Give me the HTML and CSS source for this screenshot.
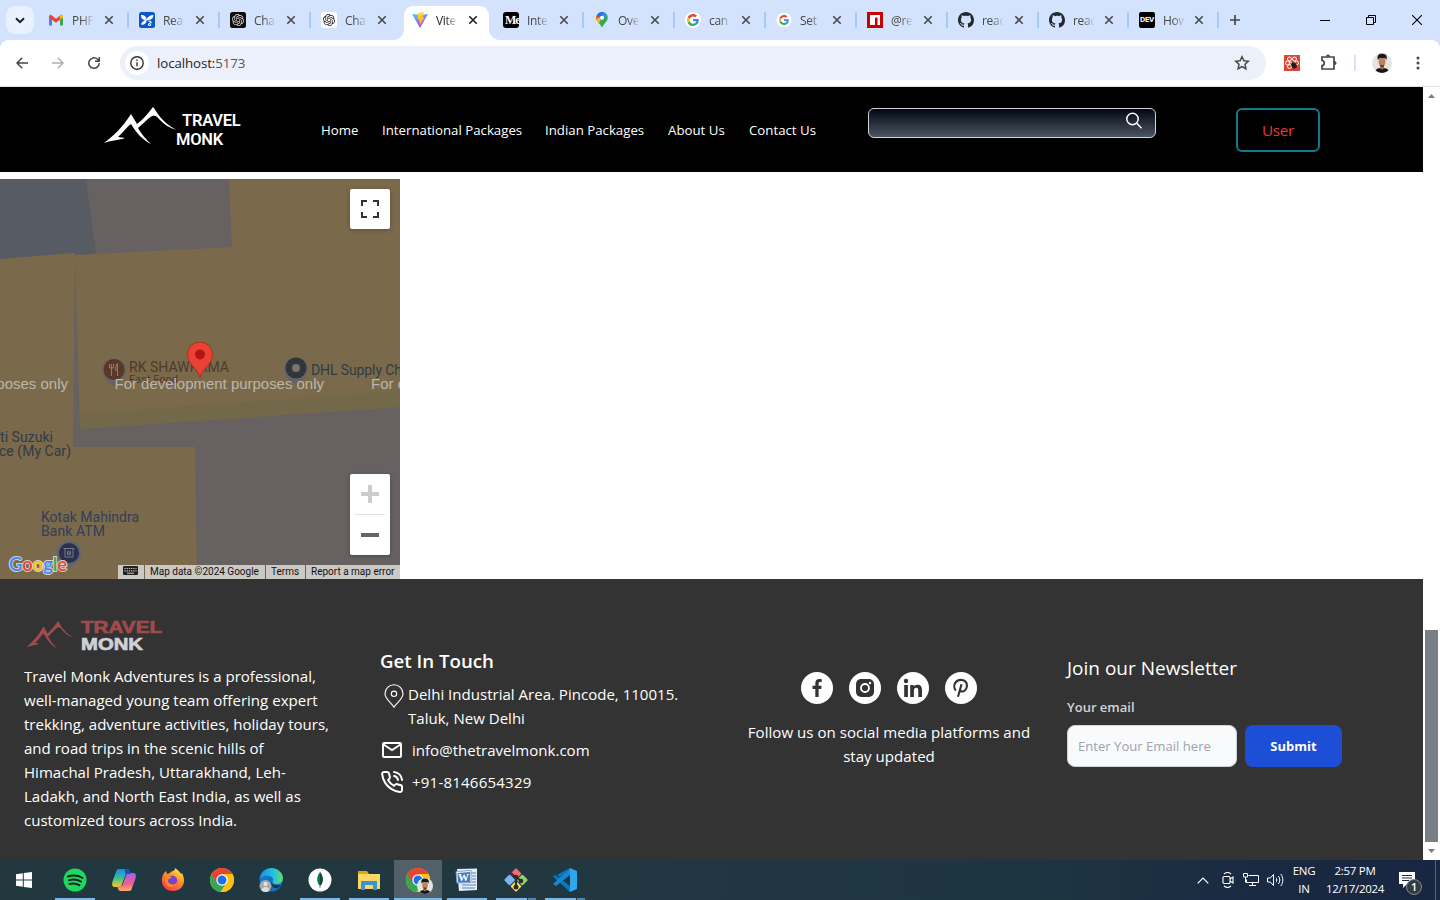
FILE: index.html
```html
<!DOCTYPE html>
<html lang="en">
<head>
<meta charset="utf-8">
<title>Vite + React</title>
<link rel="stylesheet" href="styles.css">
</head>
<body>
<svg class="defs" width="0" height="0">
  <defs>
    <symbol id="x" viewBox="0 0 10 10"><path d="M1.3 1.3l7.4 7.4M8.7 1.3L1.3 8.7" stroke="currentColor" stroke-width="1.6" fill="none"/></symbol>
    <symbol id="google" viewBox="0 0 48 48"><path fill="#ea4335" d="M24 9.5c3.5 0 6.700 1.200 9.200 3.600l6.900-6.900C35.900 2.400 30.500 0 24 0 14.600 0 6.500 5.400 2.600 13.200l8 6.200C12.400 13.700 17.700 9.500 24 9.500z"/><path fill="#4285f4" d="M47 24.600c0-1.600-.2-3.100-.4-4.600H24v9h12.900c-.6 3-2.200 5.500-4.800 7.200l7.700 6C44.400 38 47 31.800 47 24.600z"/><path fill="#fbbc05" d="M10.500 28.600A14.500 14.500 0 0 1 10.500 19.400l-8-6.200a24 24 0 0 0 0 21.600z"/><path fill="#34a853" d="M24 48c6.500 0 11.900-2.100 15.900-5.800l-7.700-6c-2.200 1.500-4.900 2.300-8.200 2.300-6.300 0-11.600-4.200-13.500-9.900l-8 6.200C6.500 42.600 14.600 48 24 48z"/></symbol>
    <symbol id="openai" viewBox="0 0 24 24"><path fill="currentColor" d="M22.282 9.821a5.985 5.985 0 0 0-.516-4.910 6.046 6.046 0 0 0-6.510-2.900A6.065 6.065 0 0 0 4.981 4.180a5.985 5.985 0 0 0-3.998 2.900 6.046 6.046 0 0 0 .743 7.097 5.980 5.980 0 0 0 .510 4.911 6.051 6.051 0 0 0 6.515 2.900A5.985 5.985 0 0 0 13.260 24a6.056 6.056 0 0 0 5.772-4.206 5.990 5.990 0 0 0 3.998-2.900 6.056 6.056 0 0 0-.748-7.073zM13.260 22.430a4.476 4.476 0 0 1-2.876-1.040l.141-.081 4.779-2.758a.795.795 0 0 0 .393-.681v-6.737l2.020 1.169a.071.071 0 0 1 .038.052v5.583a4.504 4.504 0 0 1-4.495 4.493zM3.600 18.304a4.470 4.470 0 0 1-.535-3.014l.142.085 4.783 2.759a.771.771 0 0 0 .780 0l5.843-3.369v2.332a.080.080 0 0 1-.033.062L9.740 19.950a4.500 4.500 0 0 1-6.140-1.646zM2.340 7.896a4.485 4.485 0 0 1 2.366-1.973V11.600a.766.766 0 0 0 .388.677l5.815 3.354-2.020 1.169a.076.076 0 0 1-.071 0l-4.830-2.786A4.504 4.504 0 0 1 2.340 7.872zm16.597 3.855l-5.833-3.387L15.119 7.200a.076.076 0 0 1 .071 0l4.830 2.791a4.494 4.494 0 0 1-.676 8.105v-5.678a.790.790 0 0 0-.407-.667zm2.010-3.023l-.141-.085-4.774-2.782a.776.776 0 0 0-.785 0L9.409 9.230V6.897a.066.066 0 0 1 .028-.061l4.830-2.787a4.500 4.500 0 0 1 6.680 4.660zM8.307 12.863l-2.020-1.164a.080.080 0 0 1-.038-.057V6.075a4.500 4.500 0 0 1 7.375-3.453l-.142.080L8.704 5.460a.795.795 0 0 0-.393.681zm1.098-2.366l2.602-1.500 2.606 1.500v3l-2.597 1.500-2.607-1.500z"/></symbol>
    <symbol id="github" viewBox="0 0 16 16"><path fill="#24292f" d="M8 0C3.580 0 0 3.580 0 8c0 3.540 2.290 6.530 5.470 7.590.4.070.55-.17.55-.38 0-.19-.01-.82-.01-1.490-2.010.37-2.530-.49-2.690-.94-.09-.23-.48-.94-.82-1.130-.28-.15-.68-.52-.01-.53.63-.01 1.080.58 1.230.82.72 1.210 1.870.87 2.330.66.07-.52.28-.87.51-1.070-1.780-.2-3.640-.89-3.640-3.950 0-.87.31-1.590.82-2.150-.08-.2-.36-1.020.08-2.120 0 0 .67-.21 2.200.82.64-.18 1.320-.27 2-.27s1.360.09 2 .27c1.530-1.040 2.200-.82 2.200-.82.44 1.100.16 1.920.08 2.120.51.56.82 1.270.82 2.150 0 3.070-1.870 3.750-3.650 3.950.29.25.54.73.54 1.480 0 1.070-.01 1.930-.01 2.200 0 .21.15.46.55.38A8.010 8.010 0 0 0 16 8c0-4.420-3.580-8-8-8z"/></symbol>
    <symbol id="peaks" viewBox="0 0 72 38" preserveAspectRatio="none"><path fill="currentColor" d="M0 36C9 29 18 21 27 7L33 17C38 13 44 7 49 0C52 3 55 10 60 14C64 18 68 20 72 23C66 21 61 18 56 13C53 9 51 8 48 9C43 12 39 17 34 21C38 28 42 32 47 37C39 33 33 27 27 17C24 19 21 23 17 27L14 30L21 31C16 33 8 33 0 36Z"/></symbol>
    <symbol id="chrome" viewBox="0 0 24 24"><circle cx="12" cy="12" r="12" fill="#fbc116"/><path d="M12 12L1.600 6A12 12 0 0 0 10.500 23.900L16.700 15z" fill="#34a853"/><path d="M1.600 6A12 12 0 0 1 22.400 6H12L6.800 15z" fill="#ea4335"/><path d="M22.400 6A12 12 0 0 1 10.500 23.900L16.800 14.600 12 6z" fill="#fbc116"/><circle cx="12" cy="12" r="5.700" fill="#fff"/><circle cx="12" cy="12" r="4.500" fill="#1a73e8"/></symbol>
    <symbol id="face" viewBox="0 0 20 20"><circle cx="10" cy="10" r="10" fill="#e5e4e2"/><path d="M3.500 17.500C5 15 8 15 10 15s5 0 6.500 2.500A10 10 0 0 1 3.500 17.500z" fill="#171717"/><path d="M8 12h4v3.500l-2 1-2-1z" fill="#9c6c4d"/><ellipse cx="10" cy="8.800" rx="3.500" ry="5" fill="#b98461"/><path d="M5.800 7C4.500 1 8 .2 11 .8c3 .2 4.500 2 3.400 6.200L13 5H7.500z" fill="#17191d"/><path d="M8 11.500c1 .7 3 .7 4 0L11.500 14h-3z" fill="#5a3e30"/></symbol>
  </defs>
</svg>

<header class="tabstrip">
  <button class="tab-search"><svg width="10" height="7" viewBox="0 0 10 7"><path d="M1 1.200l4 4 4-4" fill="none" stroke="#1f1f1f" stroke-width="2"/></svg></button>
  <div class="tab"><svg class="fav" viewBox="0 0 16 16"><path fill="#4285f4" d="M1 4v9.500h3V7z"/><path fill="#34a853" d="M12 7v6.500h3V4z"/><path fill="#ea4335" d="M1 4l1.500-1.500L8 6.700l5.500-4.200L15 4v1.500L8 10.700 1 5.500z"/><path fill="#fbbc04" d="M12 4v3.600l3-2.200V4l-1.500-1.500z"/></svg><span>PHP</span><svg class="close"><use href="#x"/></svg></div>
  <div class="tab"><svg class="fav" viewBox="0 0 16 16"><rect width="16" height="16" rx="2.500" fill="#0b57d0"/><g fill="#fff"><path d="M8 7.500C7 4.500 5 2.500 2 3c0 3 1 4.700 3.800 5z"/><path d="M7.500 7.500C9 4.500 11 3 14.500 3c-.5 3.500-2 5-6.500 5.200z"/><path d="M7.500 8C5 8 3 9.500 2 12.500c3 .8 5-.8 6-4.500z"/><circle cx="10.500" cy="12.500" r="1.600"/><path d="M8.500 8.500l3.500.5 1 2.500-2-1z"/></g><circle cx="10.500" cy="12.500" r=".6" fill="#0b57d0"/></svg><span>Rea</span><svg class="close"><use href="#x"/></svg></div>
  <div class="tab"><svg class="fav dark" viewBox="0 0 16 16"><rect width="16" height="16" rx="2.500" fill="#0d0d0d"/><use href="#openai" x="2" y="2" width="12" height="12"/></svg><span>Cha</span><svg class="close"><use href="#x"/></svg></div>
  <div class="tab no-line"><svg class="fav" viewBox="0 0 16 16"><rect width="16" height="16" rx="3" fill="#fff"/><use href="#openai" x="2" y="2" width="12" height="12"/></svg><span>Cha</span><svg class="close"><use href="#x"/></svg></div>
  <div class="tab active"><svg class="fav" viewBox="0 0 16 16"><defs><linearGradient id="v" x2=".6" y2="1"><stop stop-color="#41d1ff"/><stop offset="1" stop-color="#bd34fe"/></linearGradient><linearGradient id="bolt" x2="0" y2="1"><stop stop-color="#ffdd35"/><stop offset="1" stop-color="#ffa800"/></linearGradient></defs><path fill="url(#v)" d="M0 2l8 14 8-14-7 1z"/><path fill="url(#bolt)" d="M12 0L6 1.200 5.500 7.500l1.800-.4-.6 3 1.500-.5L7.500 14 12.500 5.200l-2 .4L12 0z"/></svg><span>Vite</span><svg class="close"><use href="#x"/></svg></div>
  <div class="tab"><span class="fav medium">Me</span><span>Inte</span><svg class="close"><use href="#x"/></svg></div>
  <div class="tab"><svg class="fav" viewBox="0 0 16 16"><defs><clipPath id="pinclip"><path d="M8 0a5.700 5.700 0 0 0-5.700 5.700C2.300 10 6.500 11 8 16c1.500-5 5.700-6 5.700-10.300A5.700 5.700 0 0 0 8 0z"/></clipPath></defs><g clip-path="url(#pinclip)"><path fill="#34a853" d="M0 0h16v16H0z"/><path fill="#fbbc04" d="M0 12V5l4-1 5 2-6 7z"/><path fill="#ea4335" d="M0 0h4l3 3-5 5z"/><path fill="#1a73e8" d="M3 2V0h8L6 6z"/><path fill="#4285f4" d="M10 0h6v5l-4-1-5 6-1-4z"/></g><circle cx="8" cy="5.700" r="2" fill="#fff"/></svg><span>Ove</span><svg class="close"><use href="#x"/></svg></div>
  <div class="tab"><svg class="fav" viewBox="0 0 16 16"><circle cx="8" cy="8" r="8" fill="#fff"/><use href="#google" x="2" y="2" width="12" height="12"/></svg><span>can</span><svg class="close"><use href="#x"/></svg></div>
  <div class="tab"><svg class="fav" viewBox="0 0 16 16"><circle cx="8" cy="8" r="7.500" fill="#fff"/><use href="#google" x="3" y="3" width="10" height="10"/></svg><span>Set</span><svg class="close"><use href="#x"/></svg></div>
  <div class="tab"><svg class="fav" viewBox="0 0 16 16"><path fill="#cb0000" d="M0 0h16v16H0z"/><path fill="#fff" d="M3 3h10v10h-2.500V5.500H8V13H3z"/></svg><span>@rea</span><svg class="close"><use href="#x"/></svg></div>
  <div class="tab"><svg class="fav"><use href="#github"/></svg><span>reac</span><svg class="close"><use href="#x"/></svg></div>
  <div class="tab short"><svg class="fav"><use href="#github"/></svg><span>reac</span><svg class="close"><use href="#x"/></svg></div>
  <div class="tab short"><span class="fav dev">DEV</span><span>How</span><svg class="close"><use href="#x"/></svg></div>
  <svg class="new-tab" width="10" height="10"><path d="M5 0v10M0 5h10" stroke="#474747" stroke-width="1.700"/></svg>
  <div class="window-buttons">
    <svg width="10" height="10"><path d="M0 5.500h10" stroke="#000"/></svg>
    <svg width="10" height="10" fill="none" stroke="#000"><path d="M.5 2.500h7v7h-7zM2.500 2.500v-2h7v7h-2"/></svg>
    <svg width="10" height="10"><path d="M0 0l10 10M10 0L0 10" stroke="#000" stroke-width="1.100"/></svg>
  </div>
</header>

<div class="toolbar">
  <div class="nav-buttons">
    <svg width="12" height="12" fill="none" stroke="#474747" stroke-width="1.500"><path d="M12 6H1.200M6.200.8L1 6l5.200 5.200"/></svg>
    <svg width="12" height="12" fill="none" stroke="#b0b0b0" stroke-width="1.500"><path d="M0 6h10.800M5.800.8L11 6l-5.200 5.200"/></svg>
    <svg width="12" height="12" fill="none" stroke="#474747" stroke-width="1.500"><path d="M11.200 6A5.200 5.200 0 1 1 9.600 2.300L11.200 4M11.300 0v4.300H7"/></svg>
  </div>
  <div class="omnibox">
    <span class="site-info"><svg width="14" height="14" fill="none" stroke="#333" stroke-width="1.400"><circle cx="7" cy="7" r="6.200"/><path d="M7 6.200v4M7 3.500v1.500"/></svg></span>
    <span class="url">localhost:<i>5173</i></span>
    <svg class="star" width="16" height="16" fill="none" stroke="#474747" stroke-width="1.500"><path d="M8 1.800l1.900 4 4.400.5-3.300 3 .9 4.400L8 11.500l-3.900 2.200.9-4.400-3.300-3 4.400-.5z"/></svg>
  </div>
  <svg class="ext" width="16" height="16"><path fill="#e04434" d="M0 0h16v16H0z"/><g fill="none" stroke="#fff" stroke-width="1"><circle cx="5.500" cy="4" r="2"/><circle cx="10.500" cy="4" r="2"/><circle cx="3.500" cy="8" r="2"/><circle cx="12.500" cy="8" r="2"/><circle cx="5.500" cy="11.500" r="2"/><path d="M5 6l5 4"/></g><ellipse cx="10" cy="10.500" rx="2.500" ry="3.300" fill="#211b1b" transform="rotate(-30 10 10.500)"/></svg>
  <svg class="puzzle" width="18" height="18" fill="none" stroke="#474747" stroke-width="1.700"><path d="M2 3h12v12H2v-3.500c3 0 3-5 0-5z"/><path d="M6.500 2.200a1.500 1.200 0 0 1 3 0zM14.800 7.500a1.200 1.500 0 0 1 0 3z" fill="#474747" stroke-width="1"/></svg>
  <i class="sep"></i>
  <svg class="avatar" width="20" height="20"><use href="#face"/></svg>
  <svg class="dots" width="4" height="14" fill="#474747"><circle cx="2" cy="2" r="1.500"/><circle cx="2" cy="7" r="1.500"/><circle cx="2" cy="12" r="1.500"/></svg>
</div>

<div class="viewport">
<div class="page">
  <nav class="navbar">
    <div class="logo">
      <svg class="peaks" width="72" height="38"><use href="#peaks"/></svg>
      <div class="logo-text"><b>TRAVEL</b><b>MONK</b></div>
    </div>
    <ul class="links"><li class="l1">Home</li><li class="l2">International Packages</li><li class="l3">Indian Packages</li><li class="l4">About Us</li><li>Contact Us</li></ul>
    <div class="search"><svg width="18" height="18" fill="none" stroke="#fff" stroke-width="1.500"><circle cx="7.500" cy="7" r="5.700"/><path d="M11.800 11.300l4.700 5"/></svg></div>
    <button class="user">User</button>
  </nav>

  <section class="map">
    <svg width="400" height="400" viewBox="0 0 400 400">
      <path fill="#676162" d="M0 0h400v400H0z"/>
      <path fill="#575b64" d="M0 0h86l10 76-96 6z"/>
      <path fill="#5b5b5e" d="M88 20l8 56h-5z"/>
      <path fill="#7a6a4b" d="M0 80l75-6-2 194h122l2 132H0z"/>
      <path fill="#7a6a4b" d="M75 76l157-8-3-68h171v228L80 250z"/>
      <path fill="#73684a" d="M80 235l320-23v16L80 250z"/>
      <g class="poi">
        <path d="M114 208c-4-4-12-9-12-17a12 12 0 0 1 24 0c0 8-8 13-12 17z" fill="#666463"/><circle cx="114" cy="190.500" r="10.500" fill="#5a3828"/>
        <path d="M109.500 185v4M111.500 185v4M113.500 185v4M109.500 189h4M111.500 189v8M117.500 197v-12c-2 1-2 4-2 6h2" stroke="#8d786c" fill="none" stroke-width="1.100"/>
        <text x="129" y="193" textLength="100" fill="#50382e">RK SHAWRAMA</text>
        <text x="129" y="204" font-size="11" textLength="49" fill="#50382e">Fast Food</text>
        <path d="M296 207c-4-4-12-8-12-17a12 12 0 0 1 24 0c0 9-8 13-12 17z" fill="#666463"/><circle cx="296" cy="189" r="10.500" fill="#30363c"/><circle cx="296" cy="189" r="4" fill="#77726c"/>
        <g fill="#2f3b45"><text x="311" y="196" textLength="91">DHL Supply Ch</text><text x="0" y="263" textLength="53">ti Suzuki</text><text x="-1" y="277" textLength="72">ce (My Car)</text></g>
        <g fill="#333d5b"><text x="41" y="343" textLength="98">Kotak Mahindra</text><text x="41" y="357" textLength="64">Bank ATM</text></g>
        <path d="M69 390c-4-4-12-8-12-16a12 12 0 0 1 24 0c0 8-8 12-12 16z" fill="#606472"/><circle cx="69" cy="374" r="10" fill="#2b304e"/><path d="M63.500 369.500h11M65 370v8h8v-8M67.500 372v4M69 371.500v5M70.500 372v4" stroke="#777b86" fill="none"/>
      </g>
      <g class="watermark"><text x="-142" y="209.500" textLength="210">For development purposes only</text><text x="114.500" y="209.500" textLength="209.500">For development purposes only</text><text x="371" y="209.500" textLength="210">For development purposes only</text></g>
      <path d="M200 199c-1-9-12.500-13-12.500-23.500a12.500 12.500 0 0 1 25 0C212.500 186 201 190 200 199z" fill="#ea4335" stroke="#b82920"/><circle cx="200" cy="175.500" r="5" fill="#b31412"/>
      <text class="google-mark" x="9" y="392" textLength="58" lengthAdjust="spacingAndGlyphs"><tspan fill="#4285f4">G</tspan><tspan fill="#ea4335">o</tspan><tspan fill="#fbbc05">o</tspan><tspan fill="#4285f4">g</tspan><tspan fill="#34a853">l</tspan><tspan fill="#ea4335">e</tspan></text>
    </svg>
    <button class="fullscreen"><svg width="18" height="18" fill="none" stroke="#333" stroke-width="2"><path d="M1 6V1h5M12 1h5v5M17 12v5h-5M6 17H1v-5"/></svg></button>
    <div class="zoom-control"><svg width="18" height="18"><path d="M9 0v18M0 9h18" stroke="#ccc" stroke-width="4"/></svg><i></i><svg width="18" height="18"><path d="M0 9h18" stroke="#666" stroke-width="4"/></svg></div>
    <div class="attribution">
      <span class="keys"><svg width="15" height="9"><path fill="#222" d="M1 0h13a1 1 0 0 1 1 1v7a1 1 0 0 1-1 1H1a1 1 0 0 1-1-1V1a1 1 0 0 1 1-1z"/><path stroke="#ccc" stroke-width="1.200" stroke-dasharray="1.200 1" d="M1.500 2.500h12M1.500 4.800h12"/><path stroke="#ccc" d="M4 7.200h7"/></svg></span><span class="data">Map data ©2024 Google</span><span class="terms">Terms</span><span class="report">Report a map error</span>
    </div>
  </section>

  <footer class="footer">
    <div class="about">
      <div class="footer-logo"><svg width="47" height="28"><use href="#peaks"/></svg><svg class="wordmark" width="84" height="36"><text class="red" x="0" y="14" textLength="81" lengthAdjust="spacingAndGlyphs">TRAVEL</text><text x="0" y="31" textLength="62" lengthAdjust="spacingAndGlyphs">MONK</text></svg></div>
      <p>Travel Monk Adventures is a professional,<br>well-managed young team offering expert<br>trekking, adventure activities, holiday tours,<br>and road trips in the scenic hills of<br>Himachal Pradesh, Uttarakhand, Leh-<br>Ladakh, and North East India, as well as<br>customized tours across India.</p>
    </div>
    <div class="contact">
      <h3>Get In Touch</h3>
      <div class="row address"><svg width="20" height="24" fill="none" stroke="#fff" stroke-width="1.100"><path d="M10 23.300C7.500 19 1 15 1 9.800a9 9 0 0 1 18 0C19 15 12.500 19 10 23.300z"/><circle cx="10" cy="9.800" r="2.700"/></svg><p>Delhi Industrial Area. Pincode, 110015.<br>Taluk, New Delhi</p></div>
      <div class="row mail"><svg width="20" height="16" fill="none" stroke="#fff" stroke-width="1.900"><rect x="1" y="1" width="18" height="14" rx="1"/><path d="M1.500 2.500L10 8l8.500-5.500"/></svg><p>info@thetravelmonk.com</p></div>
      <div class="row phone"><svg width="24" height="24" viewBox="0 0 24 24" fill="none" stroke="#fff" stroke-width="2" stroke-linecap="round" stroke-linejoin="round"><path d="M22 16.920v3a2 2 0 0 1-2.180 2 19.790 19.790 0 0 1-8.630-3.070 19.500 19.500 0 0 1-6-6A19.790 19.790 0 0 1 2.120 4.180 2 2 0 0 1 4.110 2h3a2 2 0 0 1 2 1.720c.127.960.361 1.903.7 2.810a2 2 0 0 1-.45 2.110L8.090 9.910a16 16 0 0 0 6 6l1.270-1.270a2 2 0 0 1 2.110-.45c.907.339 1.850.573 2.810.7A2 2 0 0 1 22 16.920z"/><path d="M14.050 2a9 9 0 0 1 8 7.940M14.050 6A5 5 0 0 1 18 10"/></svg><p>+91-8146654329</p></div>
    </div>
    <div class="social">
      <div class="circles">
        <span><svg width="32" height="32"><path fill="#333" d="M14.300 25v-8h-2.800v-3.200h2.800v-2.400c0-3 1.500-4.400 4-4.400 1 0 1.900.1 2.400.2v2.900h-1.500c-1.300 0-1.600.6-1.600 1.700v2h3l-.4 3.200h-2.600v8z"/></svg></span>
        <span><svg width="32" height="32"><rect x="7" y="7" width="18" height="18" rx="5" fill="#333"/><circle cx="16" cy="16" r="4" fill="none" stroke="#fff" stroke-width="1.800"/><circle cx="21" cy="11" r="1.200" fill="#fff"/></svg></span>
        <span><svg width="32" height="32" fill="#333"><circle cx="9" cy="9" r="2.200"/><path d="M7.200 13h3.700v12H7.200zM13.200 13h3.500v1.600c.7-1.200 2-1.900 3.600-1.900 3.500 0 4.700 2 4.700 5.700V25h-3.700v-6c0-2-.4-3.200-1.900-3.200-1.800 0-2.500 1.200-2.500 3.200v6h-3.700z"/></svg></span>
        <span><svg width="32" height="32" fill="none" stroke="#333" stroke-width="2.100"><path d="M10.800 18.500C8.700 16 9 12.500 10.500 10.500c3-4 9.500-3 11 .5 1.500 3.700-1 8.500-4 8.500-1.500 0-2.500-.7-2.700-1.700M16.500 12.200L13 24.800"/></svg></span>
      </div>
      <p>Follow us on social media platforms and<br>stay updated</p>
    </div>
    <form class="newsletter">
      <h3>Join our Newsletter</h3>
      <label>Your email</label>
      <div class="fields"><span class="input">Enter Your Email here</span><button type="button">Submit</button></div>
    </form>
  </footer>
</div>
<aside class="scrollbar"><svg width="7" height="4"><path fill="#767c82" d="M0 4L3.500 0 7 4z"/></svg><i></i><svg width="7" height="4"><path fill="#767c82" d="M0 0l3.500 4L7 0z"/></svg></aside>
</div>

<div class="taskbar">
  <div class="app start"><svg width="16" height="16" fill="#fff"><path d="M0 2.200l6.800-1v6.300H0zM7.800 1L16 0v7.500H7.800zM0 8.500h6.800v6.300L0 13.800zM7.800 8.500H16V16l-8.200-1.100z"/></svg></div>
  <div class="app open"><svg viewBox="0 0 24 24"><circle cx="12" cy="12" r="11.500" fill="#1ed760"/><path d="M5 8.500c5-1.500 10-1 14.500 1.300M6 12.300c4-1.200 8.500-.8 12 1.200M6.500 16c3.500-1 7-.5 10 1.100" fill="none" stroke="#14231d" stroke-width="2" stroke-linecap="round"/></svg></div>
  <div class="app"><svg viewBox="0 0 24 24"><defs><linearGradient id="ca" x2="0" y2="1"><stop stop-color="#168bf0"/><stop offset=".5" stop-color="#3dbb91"/><stop offset="1" stop-color="#f5d21c"/></linearGradient><linearGradient id="cb" x2="0" y2="1"><stop stop-color="#a264ed"/><stop offset=".6" stop-color="#ef5e93"/><stop offset="1" stop-color="#ffb05b"/></linearGradient></defs><path d="M7 1h8c3 0 3 3 4 5h-5l-4 10c-1 3-2 3-4 3H3c-4 0-3-4-2-7L4 4c.5-2 1-3 3-3z" fill="url(#ca)"/><path d="M17 23H9c-3 0-3-3-4-5h5l4-10c1-3 2-3 4-3h3c4 0 3 4 2 7l-3 8c-.5 2-1 3-3 3z" fill="url(#cb)"/><path d="M12.500 1H15c3 0 3 3 4 5h-5.500z" fill="#1650b5"/></svg></div>
  <div class="app"><svg viewBox="0 0 24 24"><defs><linearGradient id="ff" x1=".8" x2=".2" y2="1"><stop stop-color="#fff044"/><stop offset=".45" stop-color="#ff8a22"/><stop offset="1" stop-color="#ff2c5c"/></linearGradient></defs><path d="M3 5l2-2 1 3 3-1c2-3 5-1 5-5 3 2 5 4 6 6l1-1c5 10 0 18-9 18C2 23-2 13 3 5z" fill="url(#ff)"/><circle cx="11.500" cy="12.500" r="4.700" fill="#7642cf"/><path d="M4 8c4-1 4 1 7 1-1 2-4 1-4 4 0 4 7 5 9 1-1 7-11 6-12 0z" fill="#ff8b19"/></svg></div>
  <div class="app"><svg viewBox="0 0 24 24"><use href="#chrome"/></svg></div>
  <div class="app"><svg viewBox="0 0 24 24"><defs><linearGradient id="ed"><stop stop-color="#1b8ee3"/><stop offset=".6" stop-color="#28c1dc"/><stop offset="1" stop-color="#68db68"/></linearGradient></defs><circle cx="12" cy="12" r="11.500" fill="#1478c8"/><path d="M1 11C1 4 7 0 12 0c7 0 12 5 12 10 0 4-3 6-7 6-3 0-4-1-3-3 2-4-7-9-13-2z" fill="url(#ed)"/><path d="M13 10c-3 3-1 8 9 7-3 4-9 7-13 3-3-3-1-8 4-10z" fill="#213840"/><path d="M13 10c-4 0-7 5-4 9 2 3 7 5 10 1-6 1-9-4-6-10z" fill="#176ac1"/><circle cx="6.500" cy="18" r="6" fill="#aaa"/><circle cx="6.500" cy="16" r="2" fill="#e5e5e5"/><path d="M2.500 22c1-4 7-4 8 0-2 3-6 3-8 0z" fill="#ddd"/></svg></div>
  <div class="app open"><svg viewBox="0 0 24 24"><circle cx="12" cy="12" r="11.500" fill="#fff"/><path d="M12 4c4 5 3.500 11 0 14-3.500-3-4-9 0-14z" fill="#04785a"/><path d="M12 4c4 5 3.500 11 0 14z" fill="#164b3b"/><path d="M12 17v3" stroke="#888"/></svg></div>
  <div class="app open"><svg viewBox="0 0 24 24"><path fill="#e5a50a" d="M1 3h9l2 3v3H1z"/><path fill="#fbd765" d="M1 6h22v15H1z"/><path fill="#3a93d5" d="M4 13h16v9h-4v-5H8v5H4z"/></svg></div>
  <div class="app open current"><svg viewBox="0 0 24 24"><use href="#chrome"/></svg><svg class="badge" viewBox="0 0 20 20"><use href="#face"/></svg></div>
  <div class="app open word"><svg viewBox="0 0 24 24"><path fill="#e4edf7" d="M2 1l20-.5V22l-18 1z"/><path stroke="#5684bd" stroke-width="1.200" d="M16 5h5M17 8h4M17 11h4M17 14h4M7 17h14M7 20h13"/><path fill="#fff" stroke="#7d9fc9" d="M1 3.500l15-1v12L2 15z"/><path fill="#4a78b8" d="M2.500 5L15 4v10l-12 .5z"/><text x="3" y="13" class="w">W</text></svg></div>
  <div class="app open multi"><svg viewBox="0 0 24 24"><g transform="rotate(45 12 12)"><rect x="3.500" y="3.500" width="8" height="8" rx="1" fill="#f36d6d"/><rect x="12.500" y="3.500" width="8" height="8" rx="1" fill="#94d269"/><rect x="3.500" y="12.500" width="8" height="8" rx="1" fill="#7fb3f7"/><rect x="12.500" y="12.500" width="8" height="8" rx="1" fill="#ffe050"/></g><path d="M7 5l5 5v9M12 9l5 4" fill="none" stroke="#292e31" stroke-width="2"/><circle cx="12" cy="9" r="2.300" fill="#292e31"/><circle cx="12" cy="19" r="2.500" fill="#292e31"/><circle cx="17" cy="13" r="2.300" fill="#292e31"/></svg></div>
  <div class="app open multi"><svg viewBox="0 0 24 24"><path d="M17 0l7 3v18l-7 3-.5-1V1z" fill="#2fa7ef"/><path d="M17 0L6 10 2 7 0 8.500 17 24V17L4 7" fill="#0a78c8"/><path d="M17 6v12l-8-6z" fill="#213840"/><path d="M17 0v7L3 18l-3-2L16 1z" fill="#1688d8"/></svg></div>
  <div class="tray">
    <svg class="chevron" width="12" height="7"><path d="M.7 6.300L6 1l5.300 5.300" fill="none" stroke="#fff" stroke-width="1.200"/></svg>
    <svg class="meet" width="12" height="16" fill="none" stroke="#fff" stroke-width="1.100"><rect x="1" y="4.500" width="7" height="7" rx="1"/><path d="M8 7l3-2v6L8 9M2 2C4 .3 7 .3 9 2M2 14c2 1.700 5 1.700 7 0"/></svg>
    <svg class="net" width="17" height="14" fill="none" stroke="#fff"><path d="M5.500 2.500h10v7h-12v-3M6 12.500h7M9.500 10v3M.5.500h4v3.500h-4zM2.500 4v5.500"/></svg>
    <svg class="sound" width="17" height="14" fill="none" stroke="#fff"><path d="M.5 5h2.800L6.500 1.500v11L3.300 9H.5zM9 4.800c1 1 1 3.400 0 4.400M11.300 3c2 2 2 6 0 8M13.600 1c3 3 3 9 0 12"/></svg>
    <div class="lang">ENG<br>IN</div>
    <div class="clock">2:57 PM<br>12/17/2024</div>
    <div class="notice"><svg width="17" height="16"><path fill="#fff" d="M0 0h16v12H8l-4 4v-4H0z"/><path stroke="#1b2a42" d="M3 3.500h10M3 6h10M3 8.500h7"/></svg><b>1</b></div>
  </div>
</div>
</body>
</html>
```
FILE: styles.css
```css
* { box-sizing: border-box; }
body { margin: 0; width: 1440px; height: 900px; overflow: hidden; background: #fff; font-family: "Open Sans", "Noto Sans", sans-serif; display: flex; flex-direction: column; }
svg { display: block; flex: none; }
button { font-family: inherit; border: 0; padding: 0; }
ul, p, h3 { margin: 0; padding: 0; list-style: none; }
.defs { position: absolute; }

/* Browser chrome */
.tabstrip { height: 40px; background: #d3e2fd; display: flex; flex: none; align-items: center; padding-left: 6px; }
.tab-search { width: 28px; height: 28px; border-radius: 9px; background: #e9f1fe; display: flex; align-items: center; justify-content: center; margin-right: 3px; }
.tab { width: 91px; height: 40px; flex: none; display: flex; align-items: center; padding-left: 11px; position: relative; font-size: 12px; color: #474747; }
.tab.short { width: 90px; }
.tab::after { content: ""; position: absolute; right: -1px; top: 12px; width: 2px; height: 16px; background: #a8c7fa; }
.tab.no-line::after { display: none; }
.fav { width: 16px; height: 16px; flex: none; color: #222; }
.fav.dark { color: #ddd; }
.tab > span:not(.fav) { width: 21px; margin-left: 8px; overflow: hidden; white-space: nowrap; letter-spacing: -.3px; mask-image: linear-gradient(90deg, #000 45%, transparent 105%); }
.close { width: 10px; height: 10px; margin-left: 11px; color: #474747; }
.short .close { margin-left: 10px; }
.tab.active { color: #1f1f1f; }
.tab.active .close { color: #1f1f1f; }
.tab.active::before { content: ""; position: absolute; left: 3px; top: 6px; width: 85px; height: 34px; background: #fff; border-radius: 9px 9px 0 0; }
.tab.active::after { left: -7px; right: auto; top: 30px; width: 105px; height: 10px; background: radial-gradient(circle at 0 0, transparent 9.500px, #fff 10px) left / 10px 10px no-repeat, radial-gradient(circle at 100% 0, transparent 9.500px, #fff 10px) right / 10px 10px no-repeat; }
.tab.active > * { position: relative; z-index: 1; }
.medium { background: #000; color: #fff; border-radius: 3px; overflow: hidden; font: bold 12px/16px "Liberation Serif", serif; padding-left: 2px; letter-spacing: -1px; }
.dev { background: #000; color: #fff; border-radius: 2px; font: bold 8px/16px Roboto, sans-serif; letter-spacing: -.3px; text-align: center; }
.new-tab { margin-left: 12px; }
.window-buttons { margin-left: auto; display: flex; gap: 36px; padding-right: 18px; }
.toolbar { height: 47px; flex: none; border-bottom: 1px solid #dfe1e5; display: flex; align-items: center; background: radial-gradient(circle at 100% 100%, #fff 7.500px, #d3e2fd 8px) 0 0 / 8px 8px no-repeat, radial-gradient(circle at 0 100%, #fff 7.500px, #d3e2fd 8px) 100% 0 / 8px 8px no-repeat, #fff; }
.nav-buttons { display: flex; gap: 24px; width: 120px; padding-left: 16px; }
.omnibox { width: 1146px; height: 34px; border-radius: 17px; background: #ecf0fa; display: flex; align-items: center; padding: 0 16px 0 5px; }
.site-info { width: 24px; height: 24px; border-radius: 12px; background: #fff; display: flex; align-items: center; justify-content: center; }
.url { margin-left: 8px; font-size: 13.300px; color: #1f1f1f; letter-spacing: -.1px; }
.url i { font-style: normal; color: #55585c; }
.star { margin-left: auto; }
.ext { margin-left: 18px; }
.puzzle { margin-left: 20px; }
.sep { width: 2px; height: 16px; background: #d3e2fd; margin-left: 16px; }
.avatar { margin-left: 16px; }
.dots { margin-left: 24px; }

/* Page */
.viewport { display: flex; height: 773px; flex: none; }
.page { width: 1423px; flex: none; }
.navbar { height: 85px; background: #000; display: flex; color: #fff; padding-left: 104px; }
.logo { display: flex; width: 217px; padding-top: 20px; }
.peaks { width: 72px; }
.logo-text { display: flex; flex-direction: column; padding-top: 4px; font-family: Roboto, sans-serif; font-size: 16.500px; line-height: 19px; }
.logo-text b { font-weight: 600; letter-spacing: -.25px; padding-left: 6px; }
.logo-text b + b { padding-left: 0; }
.links { display: flex; gap: 24px; font-size: 13.250px; line-height: 20px; padding-top: 33px; width: 547px; white-space: nowrap; }
.l1 { width: 37px; } .l2 { width: 139px; } .l3 { width: 99px; } .l4 { width: 57px; }
.search { width: 288px; height: 30px; margin-top: 21px; border: 1px solid #d1d5db; border-radius: 6px; background: linear-gradient(#030712, #4b5563); display: flex; justify-content: flex-end; padding: 3px 12px; }
.user { width: 84px; height: 44px; margin: 21px 0 0 80px; border: 2px solid #0e7c8b; border-radius: 6px; background: #000; color: #e63b35; font-size: 15.200px; letter-spacing: -.2px; }
.map { width: 400px; height: 400px; margin-top: 7px; position: relative; }
.map text { font-family: Roboto, sans-serif; }
.poi { font-size: 14px; }
.watermark text { font-family: "Liberation Sans", sans-serif; font-size: 15px; fill: #bdb6aa; }
.map .google-mark { font-family: Lato, sans-serif; font-size: 19px; font-weight: 600; stroke: #d8d5ce; stroke-width: 2px; paint-order: stroke; }
.fullscreen { position: absolute; top: 10px; right: 10px; width: 40px; height: 40px; background: #fff; border-radius: 2px; display: flex; align-items: center; justify-content: center; box-shadow: 0 1px 4px #0004; }
.zoom-control { position: absolute; right: 10px; bottom: 24px; width: 40px; height: 81px; background: #fff; border-radius: 2px; display: flex; flex-direction: column; align-items: center; justify-content: space-between; padding: 11px 0; box-shadow: 0 1px 4px #0004; }
.zoom-control i { width: 30px; height: 1px; background: #e0e0e0; }
.attribution { position: absolute; right: 0; bottom: 0; height: 14px; width: 282px; display: flex; font: 10px/14px Roboto, sans-serif; color: #111; white-space: nowrap; }
.attribution span { background: #ccc9c5; padding-left: 5px; margin-left: 1px; }
.attribution .keys { width: 26px; margin: 0; padding-top: 1px; }
.attribution .data { width: 120px; } .attribution .terms { width: 39px; } .attribution .report { width: 94px; }

/* Footer */
.footer { height: 281px; background: #333; color: #fff; display: grid; grid-template-columns: 356px 355px 356px 356px; font-size: 15.060px; line-height: 24px; white-space: nowrap; }
.about { padding: 40px 0 0 24px; }
.footer-logo { height: 45px; display: flex; color: #a04b4d; }
.footer-logo svg { margin: 2px 8px 0 2px; }
.footer-logo .wordmark { margin: 0; overflow: visible; font: 900 17px "Liberation Sans", sans-serif; fill: #d0d1d4; stroke: #d0d1d4; stroke-width: .7px; }
.wordmark .red { fill: #a04b4d; stroke: #a04b4d; }
.contact { padding: 68px 0 0 24px; }
.contact h3 { font-size: 18.700px; font-weight: 600; line-height: 28px; }
.row { display: flex; }
.address { padding: 7px 0 0 4px; }
.address svg { margin: 2px 4px 0 0; }
.mail { margin-top: 8px; padding-left: 2px; }
.mail svg { margin: 4px 10px 0 0; }
.phone { margin-top: 8px; }
.phone p { margin-left: 8px; letter-spacing: .2px; }
.social { text-align: center; padding-top: 93px; }
.social p { letter-spacing: .03px; }
.circles { display: flex; justify-content: center; gap: 16px; margin-bottom: 16px; }
.circles span { width: 32px; height: 32px; border-radius: 16px; background: #fff; }
.newsletter { padding-top: 75px; }
.newsletter h3 { font-weight: 400; font-size: 19px; line-height: 28px; }
.newsletter label { display: block; margin-top: 15px; font-size: 13px; font-weight: 600; line-height: 20px; color: #d1d5db; }
.fields { display: flex; gap: 8px; margin-top: 8px; }
.input { width: 170px; height: 42px; border: 1px solid #d1d5db; border-radius: 8px; background: #f9fafb; color: #9ca3af; font-size: 13.100px; line-height: 40px; padding-left: 10px; }
.fields button { width: 97px; height: 42px; border-radius: 8px; background: #1d4ed8; color: #fff; font-size: 13px; font-weight: 700; }
.scrollbar { width: 17px; background: #fff; display: flex; flex-direction: column; align-items: center; padding: 7px 1px 7px 0; justify-content: space-between; }
.scrollbar i { width: 13px; height: 212px; background: #787f86; margin: auto 0 7px 0; }

/* Taskbar */
.taskbar { height: 40px; flex: none; display: flex; background: linear-gradient(90deg, #22383f 0%, #213741 45%, #1d3541 72%, #1a2942 88%, #182641 100%); color: #fff; }
.app { width: 48px; margin-right: 1px; height: 40px; display: flex; flex: none; align-items: center; justify-content: center; position: relative; }
.app:first-child { margin-right: 3px; }
.app > svg { width: 24px; height: 24px; }
.start > svg { width: 16px; height: 16px; }
.open::after { content: ""; position: absolute; bottom: 0; left: 4px; width: 40px; height: 2px; background: #76b9ed; }
.current { background: #526168; }
.current::after { left: 0; width: 48px; }
.app > .badge { position: absolute; left: 23px; top: 18px; width: 16px; height: 16px; }
.multi::after { background: linear-gradient(90deg, #76b9ed 31px, #213741 31px 32px, #5487a9 32px); }
.w { font: bold 11px "Liberation Serif", serif; fill: #fff; }
.tray { margin-left: auto; display: flex; align-items: center; font-size: 11.500px; line-height: 18px; text-align: center; height: 40px; padding-right: 19px; border-right: 1px solid #5b6678; margin-right: 4px; letter-spacing: -.3px; }
.meet { margin-left: 13px; }
.net { margin-left: 9px; }
.sound { margin-left: 7px; }
.lang { margin-left: 7px; width: 26px; }
.clock { margin-left: 7px; width: 62px; white-space: nowrap; }
.notice { position: relative; margin-left: 13px; width: 17px; }
.notice b { position: absolute; left: 7px; top: 7px; width: 16px; height: 16px; border: 1px solid #858b91; border-radius: 8px; background: #333a40; font: 600 11px/14px "Open Sans", sans-serif; }
```
